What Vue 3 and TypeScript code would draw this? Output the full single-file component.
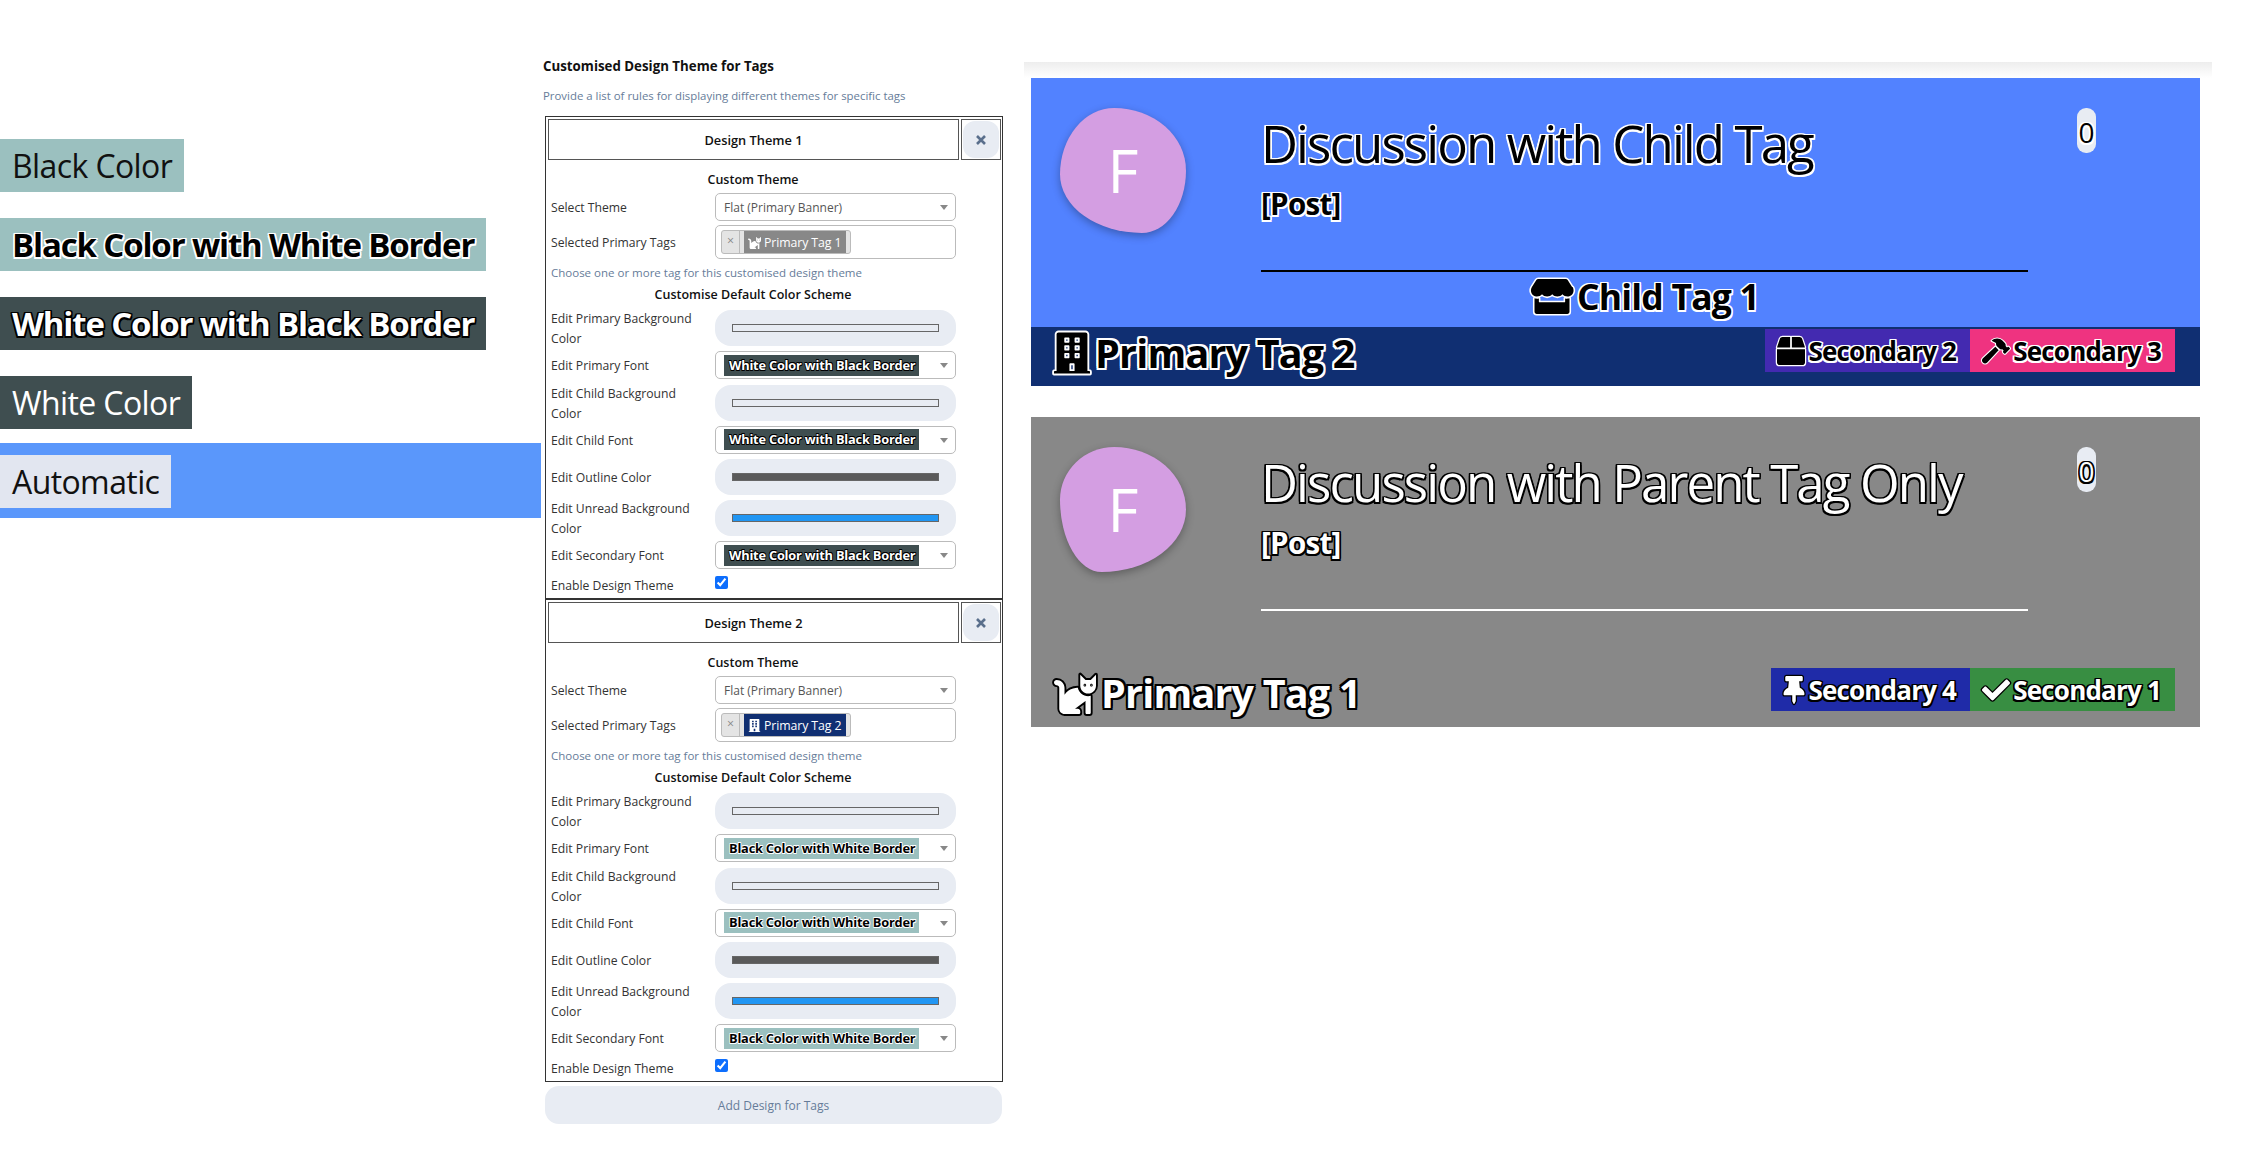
<script setup lang="ts">
  // font options shown on the left
  const fontChips = [
    { text: 'Black Color', cls: 'teal plain-black' },
    { text: 'Black Color with White Border', cls: 'teal bold out-white' },
    { text: 'White Color with Black Border', cls: 'slate bold out-black' },
    { text: 'White Color', cls: 'slate plain-white' },
  ]

  type Row = { label: string; kind: 'color' | 'font'; color?: string }

  const rows: Row[] = [
    { label: 'Edit Primary Background Color', kind: 'color', color: '#e8ecf3' },
    { label: 'Edit Primary Font', kind: 'font' },
    { label: 'Edit Child Background Color', kind: 'color', color: '#e8ecf3' },
    { label: 'Edit Child Font', kind: 'font' },
    { label: 'Edit Outline Color', kind: 'color', color: '#5a5a5a' },
    { label: 'Edit Unread Background Color', kind: 'color', color: '#2196f3' },
    { label: 'Edit Secondary Font', kind: 'font' },
  ]

  const themes = [
    { title: 'Design Theme 1', tag: 'Primary Tag 1', tagBg: '#888888', icon: 'cat', font: 'White Color with Black Border', fontCls: 'slate out-black' },
    { title: 'Design Theme 2', tag: 'Primary Tag 2', tagBg: '#102f72', icon: 'building', font: 'Black Color with White Border', fontCls: 'teal out-white' },
  ]

  // font awesome style glyphs
  const icons: Record<string, { box: string; d: string }> = {
    cat: { box: '0 0 512 512', d: 'M290.59 192c-20.18 0-106.82 1.98-162.59 85.95V192c0-52.94-43.06-96-96-96-17.67 0-32 14.33-32 32s14.33 32 32 32c17.64 0 32 14.36 32 32v256c0 35.3 28.7 64 64 64h176c8.84 0 16-7.16 16-16v-16c0-17.67-14.33-32-32-32h-32l128-96v144c0 8.84 7.16 16 16 16h32c8.84 0 16-7.16 16-16V289.86c-10.29 2.67-20.89 4.54-32 4.54-61.81 0-113.52-44.05-125.41-102.4zM448 96h-64l-64-64v134.4c0 53.02 42.98 96 96 96s96-42.98 96-96V32l-64 64zm-72 80c-8.84 0-16-7.16-16-16s7.16-16 16-16 16 7.16 16 16-7.16 16-16 16zm80 0c-8.84 0-16-7.16-16-16s7.16-16 16-16 16 7.16 16 16-7.16 16-16 16z' },
    building: { box: '0 0 448 512', d: 'M436 480h-20V24c0-13.255-10.745-24-24-24H56C42.745 0 32 10.745 32 24v456H12c-6.627 0-12 5.373-12 12v20h448v-20c0-6.627-5.373-12-12-12zM128 76c0-6.627 5.373-12 12-12h40c6.627 0 12 5.373 12 12v40c0 6.627-5.373 12-12 12h-40c-6.627 0-12-5.373-12-12V76zm0 96c0-6.627 5.373-12 12-12h40c6.627 0 12 5.373 12 12v40c0 6.627-5.373 12-12 12h-40c-6.627 0-12-5.373-12-12v-40zm52 148h-40c-6.627 0-12-5.373-12-12v-40c0-6.627 5.373-12 12-12h40c6.627 0 12 5.373 12 12v40c0 6.627-5.373 12-12 12zm76 160h-64v-84c0-6.627 5.373-12 12-12h40c6.627 0 12 5.373 12 12v84zm64-172c0 6.627-5.373 12-12 12h-40c-6.627 0-12-5.373-12-12v-40c0-6.627 5.373-12 12-12h40c6.627 0 12 5.373 12 12v40zm0-96c0 6.627-5.373 12-12 12h-40c-6.627 0-12-5.373-12-12v-40c0-6.627 5.373-12 12-12h40c6.627 0 12 5.373 12 12v40zm0-96c0 6.627-5.373 12-12 12h-40c-6.627 0-12-5.373-12-12V76c0-6.627 5.373-12 12-12h40c6.627 0 12 5.373 12 12v40z' },
    store: { box: '0 0 616 512', d: 'M602 118.6L537.1 15C531.3 5.7 521 0 510 0H106C95 0 84.7 5.7 78.9 15L14 118.6c-33.9 54.1-3.8 129.3 59.6 137.9 4.6.6 9.2.9 13.7.9 29.9 0 56.4-13.1 74.8-33.4 18.4 20.3 45 33.4 74.8 33.4 29.9 0 56.4-13.1 74.8-33.4 18.4 20.3 45 33.4 74.8 33.4 29.9 0 56.4-13.1 74.8-33.4 18.5 20.3 45 33.4 74.8 33.4 4.6 0 9.1-.3 13.7-.9 63.6-8.5 93.7-83.7 59.7-137.9zM529.5 288c-10 0-19.9-1.5-29.5-3.8V340H116v-55.8c-9.6 2.2-19.5 3.8-29.5 3.8-6 0-12.1-.4-18-1.2-5.6-.8-11.1-2.1-16.4-3.6V480c0 17.7 14.3 32 32 32h448c17.7 0 32-14.3 32-32V283.2c-5.4 1.6-10.8 2.9-16.4 3.6-6.1.8-12.1 1.2-18.2 1.2z' },
    box: { box: '0 0 512 512', d: 'M509.5 184.6L458.9 32.8C452.4 13.2 434.1 0 413.4 0H272v192h238.7c-.4-2.5-.4-5-1.2-7.4zM240 0H98.6c-20.7 0-39 13.2-45.5 32.8L2.5 184.6c-.8 2.4-.8 4.9-1.2 7.4H240V0zM0 224v240c0 26.5 21.5 48 48 48h416c26.5 0 48-21.5 48-48V224H0z' },
    hammer: { box: '0 0 576 512', d: 'M571.31 193.94l-22.63-22.63c-6.25-6.25-16.38-6.25-22.63 0l-11.31 11.31-28.9-28.9c5.63-21.31.36-44.9-16.35-61.61l-45.25-45.25c-62.48-62.48-163.79-62.48-226.28 0l90.51 45.25v18.75c0 16.97 6.74 33.25 18.75 45.25l49.14 49.14c16.71 16.71 40.3 21.98 61.61 16.35l28.9 28.9-11.31 11.31c-6.25 6.25-6.25 16.38 0 22.63l22.63 22.63c6.25 6.25 16.38 6.25 22.63 0l90.51-90.51c6.23-6.24 6.23-16.37-.02-22.62zm-286.72-15.2c-3.7-3.7-6.84-7.79-9.85-11.95L19.64 404.96c-25.57 23.88-26.26 64.19-1.53 88.93s65.05 24.05 88.93-1.53l238.13-255.07c-3.96-2.91-7.9-5.87-11.44-9.41l-49.14-49.14z' },
    thumbtack: { box: '0 0 384 512', d: 'M298.028 214.267L285.793 96H328c13.255 0 24-10.745 24-24V24c0-13.255-10.745-24-24-24H56C42.745 0 32 10.745 32 24v48c0 13.255 10.745 24 24 24h42.207L85.972 214.267C37.465 236.82 0 277.261 0 328c0 13.255 10.745 24 24 24h136v104.007c0 1.242.289 2.467.845 3.578l24 48c2.941 5.882 11.364 5.893 14.311 0l24-48a8.008 8.008 0 0 0 .845-3.578V352h136c13.255 0 24-10.745 24-24-.001-51.183-37.983-91.42-85.973-113.733z' },
    check: { box: '0 0 512 512', d: 'M173.898 439.404l-166.4-166.4c-9.997-9.997-9.997-26.206 0-36.204l36.203-36.204c9.997-9.998 26.207-9.998 36.204 0L192 312.69 432.095 72.596c9.997-9.997 26.207-9.997 36.204 0l36.203 36.204c9.997 9.997 9.997 26.206 0 36.204l-294.4 294.401c-9.998 9.997-26.207 9.997-36.204-.001z' },
  }

  const cards = [
    {
      cls: 'card-blue', out: 'out-white', title: 'Discussion with Child Tag',
      child: { icon: 'store', text: 'Child Tag 1' },
      primary: { icon: 'building', text: 'Primary Tag 2' },
      secondary: [
        { icon: 'box', text: 'Secondary 2', bg: '#432ab0' },
        { icon: 'hammer', text: 'Secondary 3', bg: '#ef3380' },
      ],
    },
    {
      cls: 'card-grey', out: 'out-black', title: 'Discussion with Parent Tag Only',
      child: null,
      primary: { icon: 'cat', text: 'Primary Tag 1' },
      secondary: [
        { icon: 'thumbtack', text: 'Secondary 4', bg: '#1f2ba8' },
        { icon: 'check', text: 'Secondary 1', bg: '#388e42' },
      ],
    },
  ]
</script>

<template>
  <div class="page">
    <!-- font samples -->
    <section class="samples">
      <div v-for="c in fontChips" :key="c.text" class="sample-row">
        <span class="sample" :class="c.cls">{{ c.text }}</span>
      </div>
      <div class="auto-band">
        <span class="sample auto">Automatic</span>
      </div>
    </section>

    <!-- settings -->
    <section class="settings">
      <h3 class="set-title">Customised Design Theme for Tags</h3>
      <p class="set-help">Provide a list of rules for displaying different themes for specific tags</p>

      <div v-for="t in themes" :key="t.title" class="theme">
        <div class="theme-head">
          <div class="theme-name">{{ t.title }}</div>
          <div class="theme-del"><button class="del-btn">
            <svg viewBox="0 0 12 12" width="12" height="12"><path d="M2 2l8 8M10 2l-8 8" stroke="#5a6f8c" stroke-width="2.6" /></svg>
          </button></div>
        </div>
        <div class="sub-head first">Custom Theme</div>
        <div class="row">
          <div class="lbl">Select Theme</div>
          <div class="select"><span class="sel-text">Flat (Primary Banner)</span><i class="caret"></i></div>
        </div>
        <div class="row tag-row">
          <div class="lbl">Selected Primary Tags</div>
          <div class="tag-input">
            <span class="tag-pill">
              <span class="tag-x">×</span>
              <span class="tag-val" :style="{ background: t.tagBg }">
                <svg class="tag-ic" :viewBox="icons[t.icon].box"><path :d="icons[t.icon].d" /></svg>
                {{ t.tag }}
              </span>
            </span>
          </div>
        </div>
        <p class="row-help">Choose one or more tag for this customised design theme</p>
        <div class="sub-head">Customise Default Color Scheme</div>
        <div v-for="r in rows" :key="r.label" class="row">
          <div class="lbl">{{ r.label }}</div>
          <div v-if="r.kind == 'color'" class="color-btn">
            <span class="swatch" :style="{ background: r.color }"></span>
          </div>
          <div v-else class="select">
            <span class="font-chip" :class="t.fontCls">{{ t.font }}</span><i class="caret"></i>
          </div>
        </div>
        <div class="row check-row">
          <div class="lbl">Enable Design Theme</div>
          <input type="checkbox" class="chk" checked />
        </div>
      </div>

      <button class="add-btn">Add Design for Tags</button>
    </section>

    <!-- preview -->
    <section class="preview">
      <div class="header-fade"></div>
      <article v-for="c in cards" :key="c.title" class="card" :class="[c.cls, c.out]">
        <div class="card-top">
          <div class="avatar">F</div>
          <div class="card-main">
            <h2 class="card-title">{{ c.title }}</h2>
            <div class="card-post">[Post]</div>
            <div class="card-rule"></div>
            <div class="child-tag">
              <template v-if="c.child">
                <svg class="ic" :viewBox="icons[c.child.icon].box"><path :d="icons[c.child.icon].d" /></svg>
                {{ c.child.text }}
              </template>
            </div>
          </div>
          <div class="unread">0</div>
        </div>
        <div class="card-bar">
          <div class="primary-tag">
            <svg class="ic" :class="'ic-' + c.primary.icon" :viewBox="icons[c.primary.icon].box"><path :d="icons[c.primary.icon].d" /></svg>
            {{ c.primary.text }}
          </div>
          <div class="sec-list">
            <div v-for="s in c.secondary" :key="s.text" class="sec" :style="{ background: s.bg }">
              <svg class="ic" :class="'ic-' + s.icon" :viewBox="icons[s.icon].box"><path :d="icons[s.icon].d" /></svg>
              {{ s.text }}
            </div>
          </div>
        </div>
      </article>
    </section>
  </div>
</template>

<style scoped>
.page {
  display: flex;
  align-items: flex-start;
  width: 2262px;
  height: 1158px;
  overflow: hidden;
  background: #fff;
  font-family: "Open Sans", "Liberation Sans", sans-serif;
  color: #111;
}

/* outline text */
.out-white, .out-black {
  --o: 1px;
}
.out-white {
  --oc: #fff;
  color: #000;
}
.out-black {
  --oc: #000;
  color: #fff;
}
.out-white, .out-black, .out-white *, .out-black * {
  text-shadow:
    calc(var(--o) * -1) calc(var(--o) * -1) 0 var(--oc),
    var(--o) calc(var(--o) * -1) 0 var(--oc),
    calc(var(--o) * -1) var(--o) 0 var(--oc),
    var(--o) var(--o) 0 var(--oc),
    0 var(--o) 0 var(--oc),
    0 calc(var(--o) * -1) 0 var(--oc),
    var(--o) 0 0 var(--oc),
    calc(var(--o) * -1) 0 0 var(--oc);
}

/* left samples */
.samples {
  width: 541px;
  flex: none;
  padding-top: 139px;
}
.sample-row {
  height: 53px;
  margin-bottom: 26px;
}
.sample {
  display: inline-block;
  height: 53px;
  line-height: 53px;
  padding: 0 12px;
  font-size: 32px;
  letter-spacing: -0.6px;
}
.teal { background: #9bc0bf; }
.slate { background: #3f4e50; }
.plain-black { color: #111; }
.plain-white { color: #fff; }
.sample.bold {
  font-size: 33px;
  font-weight: 700;
  --o: 1.5px;
  letter-spacing: -1.15px;
}
.auto-band {
  background: #5a97fb;
  height: 75px;
  padding-top: 12px;
  box-sizing: border-box;
  margin-top: -12px;
}
.auto {
  background: #e2e6f0;
  color: #111;
}

/* settings */
.settings {
  width: 460px;
  flex: none;
  margin-left: 2px;
  padding-top: 57px;
}
.set-title {
  margin: 0;
  font-size: 13.3px;
  line-height: 18px;
  font-weight: 700;
  color: #111;
}
.set-help {
  margin: 12px 0 11px;
  font-size: 11.4px;
  line-height: 18px;
  color: #667c99;
}
.theme {
  margin-left: 2px;
  width: 458px;
  height: 483px;
  box-sizing: border-box;
  border: 1px solid #333;
  padding: 2px 1px 0 2px;
}
.theme-head {
  display: flex;
  gap: 2px;
  height: 41px;
}
.theme-name {
  width: 411px;
  box-sizing: border-box;
  border: 1px solid #555;
  text-align: center;
  line-height: 40px;
  font-size: 12.8px;
  font-weight: 600;
}
.theme-del {
  width: 40px;
  box-sizing: border-box;
  border: 1px solid #555;
  padding: 1px;
}
.del-btn {
  width: 100%;
  height: 100%;
  border: 0;
  padding: 0;
  background: #e8ecf3;
  border-radius: 12px;
  display: flex;
  align-items: center;
  justify-content: center;
}
.sub-head {
  text-align: center;
  font-size: 12.5px;
  line-height: 18px;
  font-weight: 600;
  width: 410px;
  margin-bottom: 6px;
}
.sub-head.first { margin: 11px 0 4px; }
.row {
  display: flex;
  align-items: center;
  margin-bottom: 5.2px;
}
.tag-row { margin-top: -1.2px; }
.lbl {
  width: 167px;
  flex: none;
  margin: -1px 0 -3px;
  padding: 0 16px 0 3px;
  box-sizing: border-box;
  font-size: 12.2px;
  line-height: 20px;
  color: #333;
}
.select, .tag-input {
  width: 241px;
  box-sizing: border-box;
  border: 1px solid #bbb;
  border-radius: 5px;
  background: #fff;
  position: relative;
  display: flex;
  align-items: center;
}
.select { height: 28px; padding-left: 8px; }
.sel-text { font-size: 12px; color: #555; }
.caret {
  position: absolute;
  right: 7px;
  top: 11px;
  border-left: 4px solid transparent;
  border-right: 4px solid transparent;
  border-top: 5px solid #888;
}
.tag-input { height: 34px; padding-left: 5px; }
.tag-pill {
  display: inline-flex;
  height: 22px;
  border: 1px solid #bbb;
  border-radius: 3px;
  background: #e4e4e4;
  overflow: hidden;
  font-size: 12.3px;
}
.tag-x {
  width: 17px;
  text-align: center;
  color: #888;
  line-height: 20px;
  border-right: 1px solid #bbb;
}
.tag-val {
  margin-left: 4px;
  margin-right: 4px;
  padding: 0 5px 0 4px;
  color: #fff;
  display: inline-flex;
  align-items: center;
  gap: 3px;
  letter-spacing: -0.1px;
}
.tag-ic {
  width: 13px;
  height: 13px;
  fill: #fff;
}
.row-help {
  margin: 0 0 4px 3px;
  font-size: 11.5px;
  line-height: 18px;
  color: #667c99;
}
.color-btn {
  width: 241px;
  height: 36px;
  border-radius: 16px;
  background: #e8ecf3;
  display: flex;
  align-items: center;
  justify-content: center;
}
.swatch {
  width: 207px;
  height: 8px;
  border: 1px solid #666;
  box-sizing: border-box;
}
.font-chip {
  height: 21px;
  width: 195px;
  box-sizing: border-box;
  padding-left: 5px;
  line-height: 21px;
  font-size: 12.8px;
  font-weight: 700;
  letter-spacing: -0.2px;
  --o: 0.6px;
  white-space: nowrap;
}
.check-row { margin: 0; height: 20px; }
.chk {
  margin: -4px 0 0;
  width: 13px;
  height: 13px;
  accent-color: #0d6efd;
}
.add-btn {
  display: block;
  margin: 4px 0 0 2px;
  width: 457px;
  height: 38px;
  border: 0;
  border-radius: 14px;
  background: #e8ecf3;
  color: #667c99;
  font-family: inherit;
  font-size: 12px;
}

/* preview cards */
.preview {
  margin-left: 21px;
  padding-top: 62px;
  width: 1188px;
  flex: none;
}
.header-fade {
  height: 16px;
  background: linear-gradient(#ededed, #fff);
}
.card {
  margin-left: 7px;
  margin-bottom: 31px;
  width: 1169px;
  height: 308px;
  display: flex;
  flex-direction: column;
}
.card-blue { background: #5282ff; }
.card-grey { background: #888888; height: 310px; }
.card-top {
  height: 249px;
  padding: 30px 0 0 29px;
  box-sizing: border-box;
  display: flex;
  align-items: flex-start;
}
.avatar {
  width: 126px;
  height: 125px;
  flex: none;
  background: #d49ee2;
  box-shadow: 0 3px 8px rgba(0, 0, 0, 0.3);
  color: #fff;
  text-shadow: none;
  text-align: center;
  line-height: 125px;
  font-size: 60px;
  font-weight: 400;
}
.card-blue .avatar { border-radius: 43% 57% 35% 65% / 53% 50% 50% 47%; }
.card-grey .avatar { border-radius: 43% 57% 67% 33% / 42% 50% 50% 58%; }
.card-main {
  width: 767px;
  margin-left: 75px;
  flex: none;
}
.card-title {
  margin: 5px 0 0;
  height: 60px;
  line-height: 60px;
  font-size: 51px;
  font-weight: 400;
  letter-spacing: -1.9px;
  white-space: nowrap;
  --o: 1.5px;
}
.card-post {
  margin-top: 11px;
  height: 40px;
  line-height: 40px;
  font-size: 29.5px;
  font-weight: 700;
  letter-spacing: -0.7px;
  --o: 1.5px;
}
.card-rule {
  margin-top: 46px;
  height: 2px;
}
.card-blue .card-rule { background: #000; }
.card-grey .card-rule { background: #fff; }
.child-tag {
  height: 48px;
  display: flex;
  align-items: center;
  justify-content: center;
  gap: 3px;
  font-size: 35.5px;
  font-weight: 700;
  letter-spacing: -0.8px;
  --o: 1.5px;
}
.child-tag .ic { width: 44px; height: 35px; }
.unread {
  margin-left: 49px;
  width: 19px;
  height: 45px;
  border-radius: 9px;
  background: #e8ecf3;
  text-align: center;
  line-height: 48px;
  font-size: 28px;
  --o: 1.5px;
}
.card-bar {
  flex: 1;
  display: flex;
  justify-content: space-between;
  padding: 2px 25px 0 23px;
}
.card-blue .card-bar { background: #102f72; }
.primary-tag {
  display: flex;
  align-items: center;
  gap: 5px;
  height: 48px;
  font-size: 39.5px;
  font-weight: 700;
  letter-spacing: -0.8px;
  --o: 2px;
}
.card-grey .primary-tag { height: 50px; }
.primary-tag .ic { width: 36px; height: 42px; }
.primary-tag .ic-cat { width: 42px; }
.sec-list { display: flex; }
.sec {
  height: 43px;
  box-sizing: border-box;
  padding: 0 14px 0 12px;
  display: flex;
  align-items: center;
  gap: 3px;
  font-size: 26px;
  font-weight: 700;
  letter-spacing: -0.8px;
  --o: 1.5px;
}
.sec .ic { width: 28px; height: 28px; }
.sec .ic-thumbtack { width: 22px; }
.ic {
  flex: none;
  overflow: visible;
  paint-order: stroke;
  stroke-linejoin: round;
}
.out-white .ic { fill: #000; stroke: #fff; stroke-width: 46px; }
.out-black .ic { fill: #fff; stroke: #000; stroke-width: 46px; }
</style>
